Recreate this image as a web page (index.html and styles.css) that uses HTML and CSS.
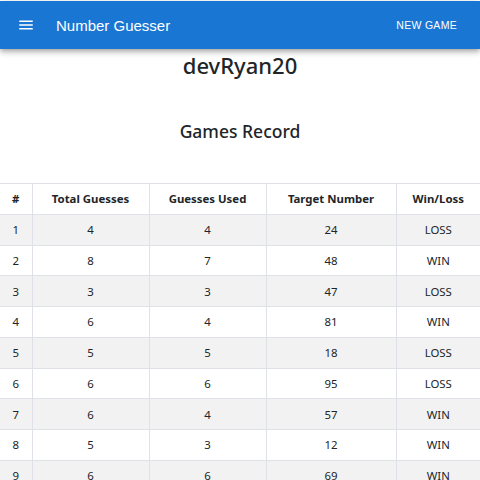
FILE: index.html
```html
<!DOCTYPE html>
<html>
<head>
<meta charset="utf-8">
<link rel="stylesheet" href="styles.css">
</head>
<body>
<header class="appbar">
  <button class="menu" aria-label="menu">
    <svg viewBox="0 0 24 24" width="18" height="18"><path d="M3 18h18v-2H3v2zm0-5h18v-2H3v2zm0-7v2h18V6H3z" fill="#fff"/></svg>
  </button>
  <div class="title">Number Guesser</div>
  <button class="newgame">NEW GAME</button>
</header>
<main>
  <h1 class="user">devRyan20</h1>
  <h2 class="section">Games Record</h2>
  <table class="records">
    <colgroup>
      <col class="c1"><col class="c2"><col class="c3"><col class="c4"><col class="c5">
    </colgroup>
    <thead>
      <tr><th>#</th><th>Total Guesses</th><th>Guesses Used</th><th>Target Number</th><th>Win/Loss</th></tr>
    </thead>
    <tbody>
      <tr><td>1</td><td>4</td><td>4</td><td>24</td><td>LOSS</td></tr>
      <tr><td>2</td><td>8</td><td>7</td><td>48</td><td>WIN</td></tr>
      <tr><td>3</td><td>3</td><td>3</td><td>47</td><td>LOSS</td></tr>
      <tr><td>4</td><td>6</td><td>4</td><td>81</td><td>WIN</td></tr>
      <tr><td>5</td><td>5</td><td>5</td><td>18</td><td>LOSS</td></tr>
      <tr><td>6</td><td>6</td><td>6</td><td>95</td><td>LOSS</td></tr>
      <tr><td>7</td><td>6</td><td>4</td><td>57</td><td>WIN</td></tr>
      <tr><td>8</td><td>5</td><td>3</td><td>12</td><td>WIN</td></tr>
      <tr><td>9</td><td>6</td><td>6</td><td>69</td><td>WIN</td></tr>
    </tbody>
  </table>
</main>
</body>
</html>
```
FILE: styles.css
```css
html, body { margin: 0; padding: 0; background: #fff; }
body { font-family: "Noto Sans", "Open Sans", sans-serif; color: #212529; }

.appbar {
  margin-top: 1px;
  height: 48px;
  background: #1976d2;
  color: #fff;
  display: flex;
  align-items: center;
  padding: 0 12px 0 17px;
  box-shadow: 0 2px 4px -1px rgba(0,0,0,0.2), 0 4px 5px 0 rgba(0,0,0,0.14), 0 1px 10px 0 rgba(0,0,0,0.12);
  position: relative;
  z-index: 1;
  font-family: "Liberation Sans", Arial, sans-serif;
}
.menu {
  background: none; border: 0; padding: 0; margin: 0;
  width: 18px; height: 18px; display: flex; margin-right: 21px;
}
.title { font-size: 15px; font-weight: 500; flex: 1; }
.newgame {
  background: none; border: 0; color: #fff;
  font-family: "Liberation Sans", Arial, sans-serif;
  font-size: 10.5px; font-weight: 500; letter-spacing: 0.3px;
  padding: 6px 11px;
}

main { text-align: center; }
.user { margin: 0; font-size: 22px; font-weight: 500; line-height: 32px; }
.section { margin: 36px 0 0; font-size: 17.5px; font-weight: 500; line-height: 28px; }

.records {
  margin-top: 38px;
  width: 480px;
  table-layout: fixed;
  border-collapse: collapse;
  font-size: 11.4px;
}
.c1 { width: 32px; } .c2 { width: 117px; } .c3 { width: 117px; } .c4 { width: 130px; } .c5 { width: 84px; }
.records th, .records td {
  border: 1px solid #dee2e6;
  padding: 0;
  height: 29.75px;
  text-align: center;
  vertical-align: middle;
}
.records tr > :first-child { border-left: 0; }
.records tr > :last-child { border-right: 0; }
.records th { font-weight: 700; }
.records tbody tr:nth-child(odd) { background: #f2f2f2; }
```
